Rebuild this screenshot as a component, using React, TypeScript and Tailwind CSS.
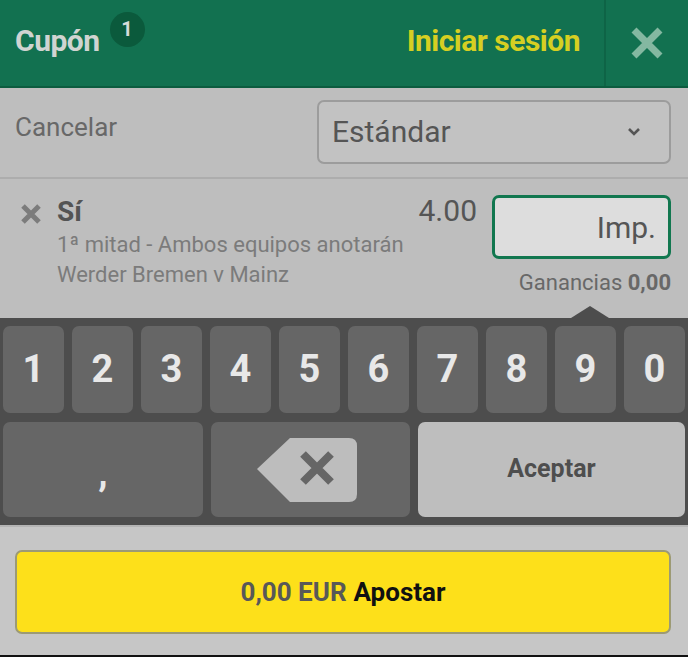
import React from "react";

const digits = ["1", "2", "3", "4", "5", "6", "7", "8", "9", "0"];

export default function App() {
  return (
    <div
      className="w-[688px] h-[657px] overflow-hidden flex flex-col bg-[#bebebe]"
      style={{ fontFamily: "Roboto, 'Noto Sans', sans-serif" }}
    >
      {/* Header */}
      <div className="h-[88px] shrink-0 flex items-stretch bg-[#127150] border-b-2 border-[#0c5c3f]">
        <div className="flex-1 flex items-center pl-[15px] pb-[6px]">
          <span className="text-[30px] font-bold text-[#d0d4d1] tracking-[-0.5px]">Cupón</span>
          <span className="ml-[10px] -mt-[22px] w-[35px] h-[35px] rounded-full bg-[#0b5a3c] flex items-center justify-center text-[20px] font-bold text-[#d6dcd8]">
            1
          </span>
          <span className="ml-auto mr-[24px] text-[30px] font-bold text-[#d6cf22] tracking-[-0.5px]">
            Iniciar sesión
          </span>
        </div>
        <div className="w-[84px] border-l-2 border-[#0e6446] flex items-center justify-center">
          <svg width="34" height="34" viewBox="0 0 34 34">
            <path d="M4 4 L30 30 M30 4 L4 30" stroke="#84b8a1" strokeWidth="7" />
          </svg>
        </div>
      </div>

      {/* Cancel / select row */}
      <div className="h-[91px] shrink-0 flex items-center justify-between pl-[15px] pr-[17px] border-b-2 border-[#adadad]">
        <span className="text-[26px] text-[#686868] -mt-[10px]">Cancelar</span>
        <div className="w-[354px] h-[64px] rounded-[7px] border-2 border-[#9c9c9c] bg-[#c2c2c2] flex items-center justify-between pl-[13px] pr-[28px] mt-[-2px]">
          <span className="text-[30px] text-[#555555]">Estándar</span>
          <svg width="14" height="10" viewBox="0 0 14 10">
            <path d="M2 2 L7 7 L12 2" stroke="#555555" strokeWidth="2.6" fill="none" />
          </svg>
        </div>
      </div>

      {/* Selection */}
      <div className="h-[139px] shrink-0 flex pl-[15px] pr-[17px] pt-[16px]">
        <div className="pt-[8px] pl-[5px] w-[42px]">
          <svg width="22" height="22" viewBox="0 0 22 22">
            <path d="M3 3 L19 19 M19 3 L3 19" stroke="#7c7c7c" strokeWidth="5" />
          </svg>
        </div>
        <div className="flex-1 flex flex-col">
          <div className="flex items-start justify-between">
            <span className="text-[28px] font-bold text-[#545454] leading-[32px] mt-[1px]">Sí</span>
            <span className="text-[30px] text-[#555555] leading-[32px] mr-[15px]">4.00</span>
          </div>
          <span className="text-[22px] text-[#7b7b7b] leading-[30px] mt-[2px]">
            1ª mitad - Ambos equipos anotarán
          </span>
          <span className="text-[22px] text-[#7b7b7b] leading-[30px]">Werder Bremen v Mainz</span>
        </div>
        <div className="w-[179px] flex flex-col items-end">
          <div className="w-full h-[64px] rounded-[7px] border-[3px] border-[#11774f] bg-[#dddddd] flex items-center justify-end pr-[12px]">
            <span className="text-[30px] text-[#555555]">Imp.</span>
          </div>
          <span className="mt-[7px] text-[22px] text-[#686868]">
            Ganancias <span className="font-bold">0,00</span>
          </span>
        </div>
      </div>

      {/* Keyboard */}
      <div className="relative shrink-0 bg-[#4d4d4d] px-[3px] pt-[8px] pb-[8px] flex flex-col gap-[9px]">
        <div className="absolute left-[571px] top-[-12px] w-0 h-0 border-l-[19px] border-r-[19px] border-b-[12px] border-l-transparent border-r-transparent border-b-[#4d4d4d]" />
        <div className="grid grid-cols-10 gap-[8px] h-[87px]">
          {digits.map((d) => (
            <div
              key={d}
              className="rounded-[7px] bg-[#666666] flex items-center justify-center text-[38px] font-bold text-[#e8e8e8]"
            >
              {d}
            </div>
          ))}
        </div>
        <div className="flex gap-[8px] h-[95px]">
          <div className="w-[200px] rounded-[7px] bg-[#666666] flex items-center justify-center text-[38px] font-bold text-[#e8e8e8] pt-[8px]">
            ,
          </div>
          <div className="w-[199px] rounded-[7px] bg-[#666666] flex items-center justify-center pr-[8px]">
            <svg width="100" height="64" viewBox="0 0 100 64">
              <path
                d="M0 31 L33 0 L92 0 Q100 0 100 8 L100 56 Q100 64 92 64 L33 64 Z"
                fill="#bdbdbd"
              />
              <path d="M46 16 L74 44 M74 16 L46 44" stroke="#666666" strokeWidth="8" />
            </svg>
          </div>
          <div className="flex-1 rounded-[7px] bg-[#bebebe] flex items-center justify-center text-[25px] font-bold text-[#4e4e4e] pb-[2px]">
            Aceptar
          </div>
        </div>
      </div>

      {/* Bottom */}
      <div className="flex-1 bg-[#c6c6c6] border-t-2 border-[#b4b4b4] pl-[15px] pr-[17px] pt-[23px] border-b-2 border-b-[#111111]">
        <div className="h-[84px] rounded-[7px] border-2 border-[#9c9a74] bg-[#fde01a] flex items-center justify-center text-[26px] font-bold">
          <span className="text-[#585858]">0,00 EUR</span>
          <span className="ml-[7px] text-[#111111]">Apostar</span>
        </div>
      </div>
    </div>
  );
}
